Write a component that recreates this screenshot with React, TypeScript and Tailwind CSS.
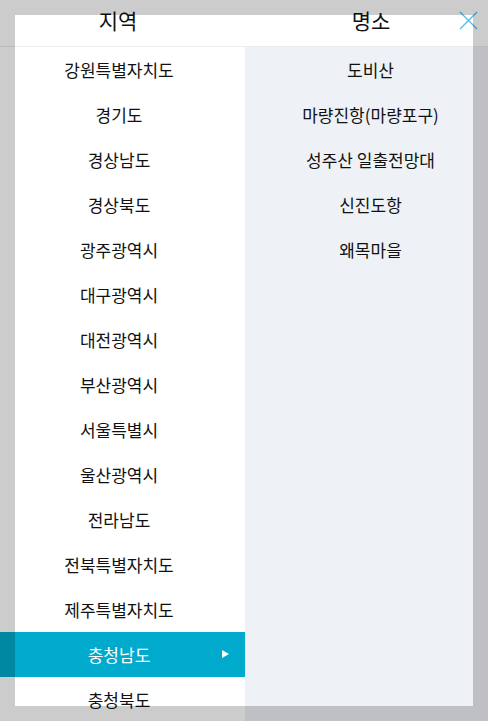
import React from "react";

const regions = [
  "강원특별자치도",
  "경기도",
  "경상남도",
  "경상북도",
  "광주광역시",
  "대구광역시",
  "대전광역시",
  "부산광역시",
  "서울특별시",
  "울산광역시",
  "전라남도",
  "전북특별자치도",
  "제주특별자치도",
  "충청남도",
  "충청북도",
];

const places = ["도비산", "마량진항(마량포구)", "성주산 일출전망대", "신진도항", "왜목마을"];

export default function App() {
  const active = "충청남도";
  return (
    <div
      className="relative w-full h-[721px] overflow-hidden bg-white text-[#111]"
      style={{ fontFamily: '"Noto Sans CJK KR", "Noto Sans", sans-serif' }}
    >
      <div className="flex h-[47px] border-b border-[#ececec] bg-white">
        <div className="w-[245px] flex items-center justify-center pr-[9px] pb-[4px] text-[21px]">지역</div>
        <div className="flex-1 flex items-center justify-center pl-[9px] pb-[4px] text-[21px]">명소</div>
        <button className="absolute right-[10px] top-[11px] w-[19px] h-[19px]">
          <svg width="19" height="19" viewBox="0 0 19 19" fill="none">
            <path d="M1 1L18 18M18 1L1 18" stroke="#4fbde9" strokeWidth="1.3" />
          </svg>
        </button>
      </div>
      <div className="flex h-[674px]">
        <ul className="w-[245px] bg-white">
          {regions.map((r) => (
            <li
              key={r}
              className={
                "relative h-[45px] flex items-center justify-center pr-[7px] text-[17px] " +
                (r === active ? "bg-[#00aacc] text-white" : "")
              }
            >
              {r}
              {r === active && (
                <svg className="absolute right-[16px] top-[18px]" width="7" height="8" viewBox="0 0 7 8">
                  <path d="M0 0L7 4L0 8Z" fill="#ffffff" />
                </svg>
              )}
            </li>
          ))}
        </ul>
        <ul className="flex-1 bg-[#eef1f6]">
          {places.map((p) => (
            <li key={p} className="h-[45px] flex items-center justify-center pl-[8px] text-[17px]">
              {p}
            </li>
          ))}
        </ul>
      </div>
      <div className="pointer-events-none absolute inset-0 border-[15px] border-black/20" />
    </div>
  );
}
